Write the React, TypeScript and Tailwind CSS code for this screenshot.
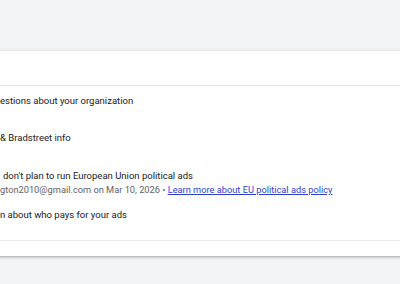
export default function App() {
  return (
    <div
      className="h-[284px] w-[400px] overflow-hidden bg-[#f1f3f4] pt-[51px]"
      style={{ fontFamily: "Roboto, 'Liberation Sans', sans-serif" }}
    >
      {/* Card, cropped on both sides */}
      <div className="-mx-2 bg-white shadow-[0_1px_2px_rgba(60,64,67,0.3),0_1px_4px_rgba(60,64,67,0.15)]">
        <div className="h-[35px] border-b border-[#e3e3e3]" />

        <div className="pl-2 pt-[8px] text-[9.5px] text-[#202124]">
          <div className="h-[14px] leading-[14px] whitespace-nowrap">estions about your organization</div>
          <div className="mt-[23px] h-[14px] leading-[14px] whitespace-nowrap">&amp; Bradstreet info</div>
          <div className="mt-[24px] h-[14px] pl-[3px] leading-[14px] whitespace-nowrap">
            don't plan to run European Union political ads
          </div>
          <div className="h-[14px] leading-[14px] whitespace-nowrap text-[9.25px] text-[#5f6368]">
            gton2010@gmail.com on Mar 10, 2026 •{" "}
            <a href="#" className="text-[#2f3fd6] underline">
              Learn more about EU political ads policy
            </a>
          </div>
          <div className="mt-[11px] h-[14px] leading-[14px] whitespace-nowrap">n about who pays for your ads</div>
        </div>

        <div className="mt-[18px] h-[16px] border-t border-[#e8e8e8]" />
      </div>
    </div>
  );
}
